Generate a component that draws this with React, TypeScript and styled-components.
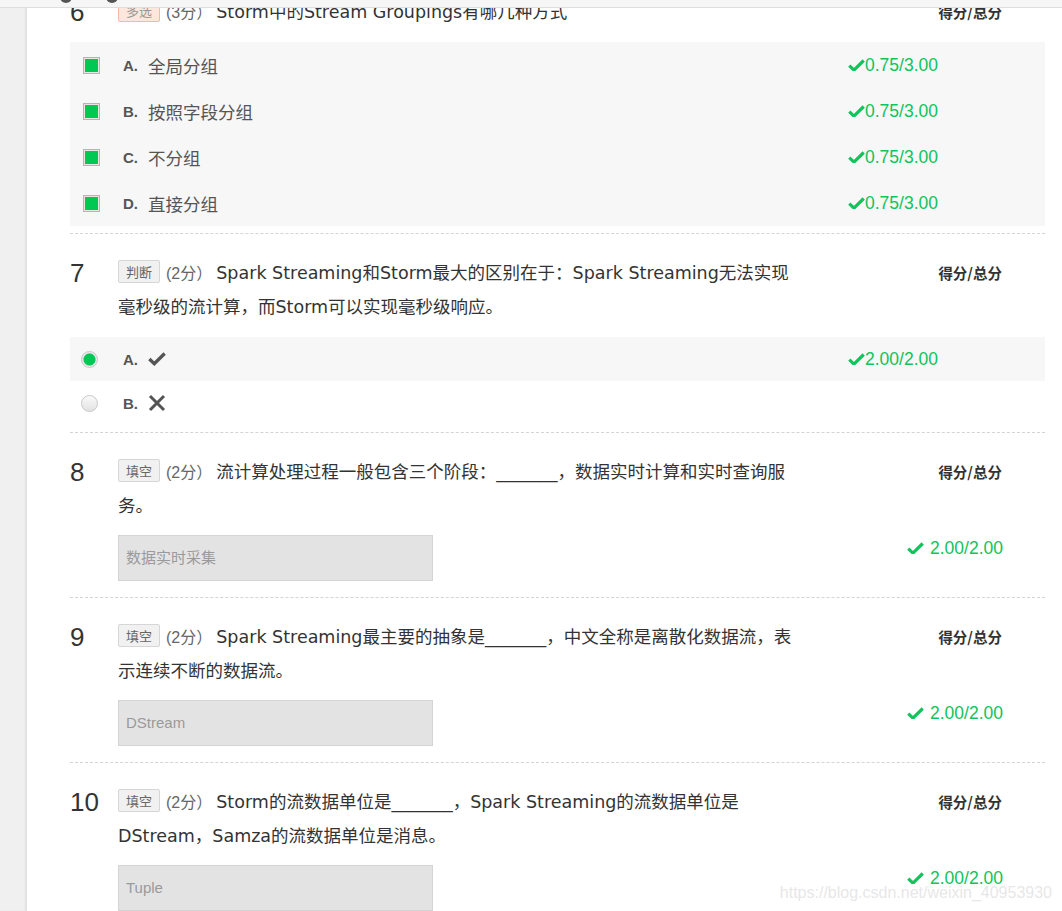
import * as React from 'react';
import styled, { createGlobalStyle } from 'styled-components';

const GlobalStyle = createGlobalStyle`
    html, body {
        margin: 0;
        padding: 0;
        height: 911px;
        overflow: hidden;
        background: #fff;
    }
    body {
        font-family: "DejaVu Sans", "Noto Sans CJK SC", sans-serif;
        color: #333;
    }
`;

type Tone = 'multi' | 'plain';

interface Option {
    letter: string;
    text?: string;
    mark?: 'yes' | 'no';
    checked?: boolean;
    score?: string;
    shaded: boolean;
}

interface Question {
    no: number;
    type: string;
    tone: Tone;
    points: number;
    text: string;
    kind: 'check' | 'radio' | 'fill';
    options?: Option[];
    answer?: string;
    score?: string;
}

const GREEN = '#10c35b';

// line breaks follow the original page's wrapping
const questions: Question[] = [
    {
        no: 6,
        type: '多选',
        tone: 'multi',
        points: 3,
        text: 'Storm中的Stream Groupings有哪几种方式',
        kind: 'check',
        options: [
            { letter: 'A', text: '全局分组', checked: true, score: '0.75/3.00', shaded: true },
            { letter: 'B', text: '按照字段分组', checked: true, score: '0.75/3.00', shaded: true },
            { letter: 'C', text: '不分组', checked: true, score: '0.75/3.00', shaded: true },
            { letter: 'D', text: '直接分组', checked: true, score: '0.75/3.00', shaded: true }
        ]
    },
    {
        no: 7,
        type: '判断',
        tone: 'plain',
        points: 2,
        text: 'Spark Streaming和Storm最大的区别在于：Spark Streaming无法实现\n毫秒级的流计算，而Storm可以实现毫秒级响应。',
        kind: 'radio',
        options: [
            { letter: 'A', mark: 'yes', checked: true, score: '2.00/2.00', shaded: true },
            { letter: 'B', mark: 'no', shaded: false }
        ]
    },
    {
        no: 8,
        type: '填空',
        tone: 'plain',
        points: 2,
        text: '流计算处理过程一般包含三个阶段：_______，数据实时计算和实时查询服\n务。',
        kind: 'fill',
        answer: '数据实时采集',
        score: '2.00/2.00'
    },
    {
        no: 9,
        type: '填空',
        tone: 'plain',
        points: 2,
        text: 'Spark Streaming最主要的抽象是_______，中文全称是离散化数据流，表\n示连续不断的数据流。',
        kind: 'fill',
        answer: 'DStream',
        score: '2.00/2.00'
    },
    {
        no: 10,
        type: '填空',
        tone: 'plain',
        points: 2,
        text: 'Storm的流数据单位是_______，Spark Streaming的流数据单位是\nDStream，Samza的流数据单位是消息。',
        kind: 'fill',
        answer: 'Tuple',
        score: '2.00/2.00'
    }
];

const Page = styled.div`
    display: flex;
    height: 911px;
    position: relative;
    overflow: hidden;
`;

const Rail = styled.div`
    width: 27px;
    flex-shrink: 0;
    background: #f0f0f0;
    box-shadow: inset -2px 0 2px rgba(0, 0, 0, 0.06);
`;

const TopBar = styled.div`
    position: fixed;
    top: 0;
    left: 0;
    right: 0;
    height: 7px;
    background: #f6f6f6;
    border-bottom: 1px solid #dedede;
    z-index: 5;
    overflow: hidden;
`;

const TopIcon = styled.span<{ $left: number }>`
    position: absolute;
    left: ${p => p.$left}px;
    top: -9px;
    width: 12px;
    height: 12px;
    border-radius: 50%;
    background: #555;
`;

const Main = styled.main`
    flex: 1;
    padding: 0 17px 0 43px;
`;

const QuestionBlock = styled.section`
    padding: 22px 0 0;
    border-bottom: 1px dashed #d4d4d4;

    &:first-child {
        margin-top: -27px;
    }
`;

const Head = styled.div`
    display: flex;
    align-items: flex-start;
`;

const Number = styled.div`
    width: 48px;
    flex-shrink: 0;
    font-family: "Liberation Sans", Arial, sans-serif;
    font-size: 26px;
    line-height: 34px;
    color: #333;
`;

const Body = styled.div`
    width: 720px;
    font-size: 17.5px;
    line-height: 34px;
    color: #333;
    white-space: pre-line;
`;

const Badge = styled.span<{ $tone: Tone }>`
    display: inline-block;
    height: 21px;
    line-height: 21px;
    padding: 0 7px;
    margin-right: 6px;
    font-family: "Noto Sans CJK SC", sans-serif;
    font-size: 13px;
    vertical-align: middle;
    position: relative;
    top: -3px;
    border-radius: 2px;
    color: ${p => (p.$tone === 'multi' ? '#999' : '#666')};
    background: ${p => (p.$tone === 'multi' ? '#fde6dd' : '#f1f1f1')};
    border: 1px solid ${p => (p.$tone === 'multi' ? '#f4b9a2' : '#d6d6d6')};
`;

const Points = styled.span`
    font-family: "Liberation Sans", "Noto Sans CJK SC", sans-serif;
    font-size: 16px;
    line-height: 1;
    color: #666;
    margin-right: 4px;
`;

const ScoreHead = styled.div`
    margin-left: auto;
    margin-right: 43px;
    font-family: "Noto Sans CJK SC", sans-serif;
    font-size: 14.5px;
    line-height: 34px;
    font-weight: 700;
    color: #333;
`;

const OptionList = styled.div`
    margin-top: 13px;
    padding-bottom: 7px;
`;

const OptionRow = styled.div<{ $shaded: boolean; $compact: boolean }>`
    display: grid;
    grid-template-columns: 53px 25px 1fr 197px;
    align-items: center;
    height: ${p => (p.$compact ? '44px' : '46px')};
    background: ${p => (p.$shaded ? '#f7f7f7' : 'transparent')};
`;

const Box = styled.span<{ $checked?: boolean }>`
    margin-left: 13px;
    width: 15px;
    height: 15px;
    border: 1px solid #b5b5b5;
    background: ${p => (p.$checked ? '#00c853' : '#fff')};
    box-shadow: inset 0 0 0 1px #e6e6e6;
`;

const Radio = styled.span<{ $checked?: boolean }>`
    margin-left: 11px;
    width: 17px;
    height: 17px;
    border-radius: 50%;
    box-sizing: border-box;
    border: 1px solid #c8c8c8;
    background: ${p =>
        p.$checked
            ? 'radial-gradient(circle, #00c853 0 5.5px, #e9e9e9 6.5px)'
            : 'linear-gradient(#fafafa, #e2e2e2)'};
`;

const Letter = styled.span`
    font-family: "Liberation Sans", Arial, sans-serif;
    font-size: 15px;
    font-weight: 700;
    color: #555;
`;

const OptionText = styled.span`
    font-family: "Noto Sans CJK SC", sans-serif;
    font-size: 17.5px;
    color: #555;
    display: flex;
    align-items: center;
`;

const Score = styled.span<{ $spaced?: boolean }>`
    display: inline-flex;
    align-items: center;
    gap: ${p => (p.$spaced ? '6px' : '0')};
    font-family: "Liberation Sans", Arial, sans-serif;
    font-size: 17.5px;
    color: ${GREEN};
`;

const FillRow = styled.div`
    display: flex;
    align-items: flex-start;
    margin-top: 12px;
    padding: 0 42px 16px 48px;
`;

const AnswerBox = styled.div`
    width: 306px;
    height: 44px;
    line-height: 44px;
    padding-left: 7px;
    box-sizing: content-box;
    background: #e3e3e3;
    border: 1px solid #d4d4d4;
    font-family: "Liberation Sans", "Noto Sans CJK SC", sans-serif;
    font-size: 15px;
    color: #9a9a9a;
`;

const FillScore = styled.div`
    margin-left: auto;
    padding-top: 1px;
    line-height: 24px;
`;

const Watermark = styled.div`
    position: absolute;
    right: 10px;
    bottom: 9px;
    font-family: "Liberation Sans", Arial, sans-serif;
    font-size: 16px;
    color: rgba(210, 210, 210, 0.55);
    pointer-events: none;
`;

const Tick = ({ color, size = 17 }: { color: string; size?: number }) => (
    <svg width={size} height={size * 0.75} viewBox="0 0 16 12">
        <path d="M1.2 6.2 L5.6 10.4 L14.8 1.4" fill="none" stroke={color} strokeWidth="3" strokeLinejoin="miter" />
    </svg>
);

const Cross = () => (
    <svg width="18" height="18" viewBox="0 0 18 18">
        <path d="M2 2 L16 16 M16 2 L2 16" stroke="#555" strokeWidth="3" />
    </svg>
);

const ChoiceOptions = ({ q }: { q: Question }) => (
    <OptionList>
        {q.options!.map(o => (
            <OptionRow key={o.letter} $shaded={o.shaded} $compact={q.kind === 'radio'}>
                {q.kind === 'check' ? <Box $checked={o.checked} /> : <Radio $checked={o.checked} />}
                <Letter>{o.letter}.</Letter>
                <OptionText>
                    {o.text}
                    {o.mark === 'yes' && <Tick color="#555" size={18} />}
                    {o.mark === 'no' && <Cross />}
                </OptionText>
                <span>
                    {o.score && (
                        <Score>
                            <Tick color={GREEN} />
                            {o.score}
                        </Score>
                    )}
                </span>
            </OptionRow>
        ))}
    </OptionList>
);

const QuestionItem = ({ q }: { q: Question }) => (
    <QuestionBlock>
        <Head>
            <Number>{q.no}</Number>
            <Body>
                <Badge $tone={q.tone}>{q.type}</Badge>
                <Points>({q.points}分）</Points>
                {q.text}
            </Body>
            <ScoreHead>得分/总分</ScoreHead>
        </Head>
        {q.kind === 'fill' ? (
            <FillRow>
                <AnswerBox>{q.answer}</AnswerBox>
                <FillScore>
                    <Score $spaced>
                        <Tick color={GREEN} />
                        {q.score}
                    </Score>
                </FillScore>
            </FillRow>
        ) : (
            <ChoiceOptions q={q} />
        )}
    </QuestionBlock>
);

export default function App() {
    return (
        <>
            <GlobalStyle />
            <Page>
                <TopBar>
                    <TopIcon $left={60} />
                    <TopIcon $left={106} />
                </TopBar>
                <Rail />
                <Main>
                    {questions.map(q => (
                        <QuestionItem key={q.no} q={q} />
                    ))}
                </Main>
                <Watermark>https://blog.csdn.net/weixin_40953930</Watermark>
            </Page>
        </>
    );
}
